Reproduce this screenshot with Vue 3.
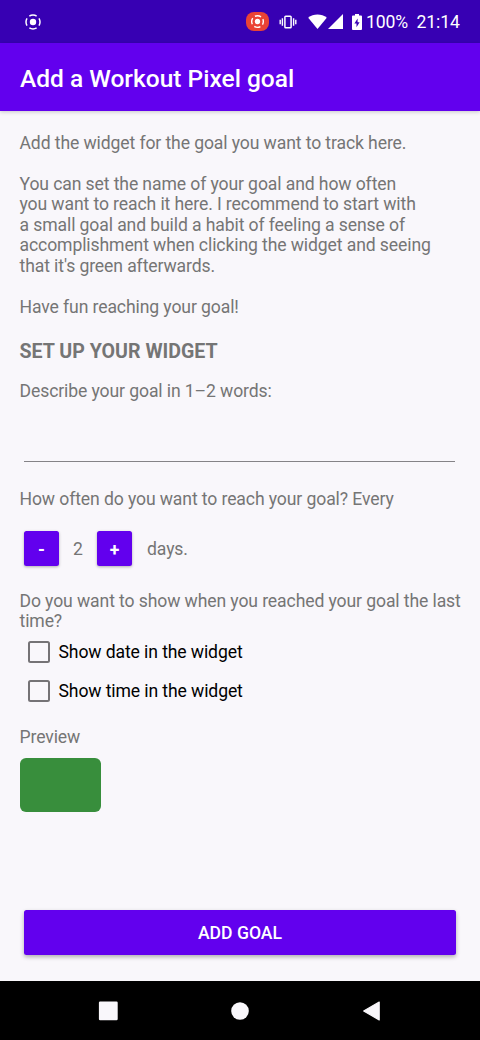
<script setup>
import { ref } from 'vue'

const intro = [
  'Add the widget for the goal you want to track here.',
  '',
  'You can set the name of your goal and how often',
  'you want to reach it here. I recommend to start with',
  'a small goal and build a habit of feeling a sense of',
  'accomplishment when clicking the widget and seeing',
  "that it's green afterwards.",
  '',
  'Have fun reaching your goal!',
].join('\n')

const name = ref('')
const days = ref(2)
const showDate = ref(false)
const showTime = ref(false)
</script>

<template>
  <div class="screen">
    <header class="status">
      <svg class="rec" viewBox="0 0 18 18" width="18" height="18">
        <circle cx="9" cy="9" r="3.2" fill="#fff" />
        <circle cx="9" cy="9" r="7" fill="none" stroke="#fff" stroke-width="1.5" pathLength="80" stroke-dasharray="14 6" stroke-dashoffset="7" />
      </svg>
      <span class="chip">
        <svg viewBox="0 0 18 18" width="15" height="15">
          <circle cx="9" cy="9" r="3.2" fill="#fff" />
          <circle cx="9" cy="9" r="7" fill="none" stroke="#fff" stroke-width="1.7" pathLength="80" stroke-dasharray="14 6" stroke-dashoffset="7" />
        </svg>
      </span>
      <svg class="vibrate" viewBox="0 0 18 14" width="18" height="14" fill="none" stroke="#fff">
        <rect x="5.9" y="1.2" width="6.2" height="11.6" rx="0.8" stroke-width="1.5" />
        <path d="M3.4 3.2v7.6M14.6 3.2v7.6M1.2 4.8v4.4M16.8 4.8v4.4" stroke-width="1.4" />
      </svg>
      <svg class="wifi" viewBox="0 0 19 15" width="19" height="15">
        <path d="M0.2 3.7C5.4-.7 13.6-.7 18.8 3.7L9.5 14.9Z" fill="#fff" />
      </svg>
      <svg class="signal" viewBox="0 0 15 15" width="15" height="15">
        <path d="M0 15 15 0V15Z" fill="#fff" />
      </svg>
      <svg class="battery" viewBox="0 0 10 16" width="10" height="16">
        <path d="M3 0h4v1.6h2.1q.9 0 .9.9v12.6q0 .9-.9.9H.9q-.9 0-.9-.9V2.5q0-.9.9-.9H3Z" fill="#fff" />
        <path d="M5.6 4.4 2.4 9.4H4.5V13.2L7.6 8.2H5.6Z" fill="#3700b3" />
      </svg>
      <span class="percent">100%</span>
      <span class="clock">21:14</span>
    </header>

    <div class="appbar"><h1>Add a Workout Pixel goal</h1></div>

    <main>
      <p class="intro">{{ intro }}</p>
      <h2>SET UP YOUR WIDGET</h2>
      <label class="describe" for="goal">Describe your goal in 1–2 words:</label>
      <input id="goal" v-model="name" type="text" />
      <p class="often">How often do you want to reach your goal? Every</p>
      <div class="stepper">
        <button class="step" @click="days = Math.max(1, days - 1)">-</button>
        <span class="count">{{ days }}</span>
        <button class="step" @click="days++">+</button>
        <span class="unit">days.</span>
      </div>
      <p class="ask">Do you want to show when you reached your goal the last time?</p>
      <div class="checks">
        <label class="check"><input v-model="showDate" type="checkbox" /><span>Show date in the widget</span></label>
        <label class="check"><input v-model="showTime" type="checkbox" /><span>Show time in the widget</span></label>
      </div>
      <p class="preview-label">Preview</p>
      <div class="preview"></div>
      <button class="add">ADD GOAL</button>
    </main>

    <nav>
      <svg viewBox="0 0 20 20" width="20" height="20"><rect x="0.9" y="0.5" width="18.8" height="18.8" rx="1.2" /></svg>
      <svg viewBox="0 0 20 20" width="20" height="20"><circle cx="10" cy="10" r="8.8" /></svg>
      <svg viewBox="0 0 20 20" width="20" height="20"><path d="M17.2 1.1v17.8L1.7 10Z" stroke="#f9f7fb" stroke-width="1.2" stroke-linejoin="round" /></svg>
    </nav>
  </div>
</template>

<style>
body {
  background: #f9f7fb;
}
</style>

<style scoped>
.screen {
  width: 480px;
  height: 1040px;
  display: flex;
  flex-direction: column;
  overflow: hidden;
  background: #f9f7fb;
  color: #757575;
  font-family: Roboto, "Liberation Sans", sans-serif;
  font-size: 17.6px;
  line-height: 20.44px;
  letter-spacing: -0.11px;
}
h1, h2, p {
  margin: 0;
}
button, input {
  box-sizing: border-box;
  border: 0;
  padding: 0;
  margin: 0;
  font: inherit;
}
.status {
  height: 43px;
  flex: none;
  display: flex;
  align-items: center;
  background: #3700b3;
  color: #fff;
  padding-left: 24px;
}
.status svg {
  flex: none;
  display: block;
}
.chip {
  width: 23px;
  height: 19px;
  margin-left: 204px;
  border-radius: 8px;
  background: #ea4335;
  display: flex;
  align-items: center;
  justify-content: center;
}
.vibrate {
  margin-left: 9.5px;
}
.wifi {
  margin-left: 11px;
}
.signal {
  margin-left: 1px;
}
.battery {
  margin-left: 9px;
}
.percent {
  margin-left: 4.5px;
  width: 50.5px;
  padding-top: 1px;
}
.clock {
  padding-top: 1px;
}
.appbar {
  height: 68px;
  flex: none;
  display: flex;
  align-items: center;
  padding: 3px 20px 0;
  box-sizing: border-box;
  background: #6200ee;
  color: #fff;
  box-shadow: 0 1px 4px rgba(0, 0, 0, 0.2);
}
h1 {
  font-size: 24.5px;
  line-height: 31px;
  font-weight: 500;
  letter-spacing: 0;
}
main {
  flex: 1;
  display: flex;
  flex-direction: column;
  align-items: flex-start;
  padding: 22px 20px 0 19.5px;
}
.intro {
  white-space: pre;
}
h2 {
  margin-top: 23.5px;
  font-size: 19.6px;
  line-height: 23px;
  font-weight: 700;
  letter-spacing: 0;
}
.describe {
  margin-top: 17.5px;
}
#goal {
  width: 431px;
  height: 46.5px;
  margin: 14px 0 0 4.5px;
  border-bottom: 1px solid #858387;
  background: transparent;
  outline: none;
}
.often {
  margin-top: 27.5px;
}
.stepper {
  display: flex;
  align-items: center;
  margin: 21.5px 0 0 4.5px;
  height: 35px;
}
.step {
  width: 35px;
  height: 35px;
  border-radius: 2.5px;
  background: #6200ee;
  color: #fff;
  font-weight: 700;
  padding-top: 2px;
  box-shadow: 0 1px 3px rgba(0, 0, 0, 0.3);
}
.count {
  width: 38px;
  text-align: center;
  padding-top: 1px;
}
.unit {
  margin-left: 15px;
  padding-top: 1px;
}
.ask {
  margin-top: 24.5px;
  width: 445px;
}
.checks {
  padding: 1px 0 0 8.5px;
}
.check {
  height: 39px;
  display: flex;
  align-items: center;
  color: #000;
  gap: 8.5px;
}
.check input {
  appearance: none;
  width: 22px;
  height: 22px;
  border: 2.5px solid #757376;
  border-radius: 2.5px;
}
.check input:checked {
  background: #6200ee;
}
.preview-label {
  margin-top: 16px;
}
.preview {
  width: 81px;
  height: 54px;
  margin-top: 10.5px;
  border-radius: 6px;
  background: #388e3c;
}
.add {
  width: 432px;
  height: 45px;
  margin: auto 0 26px 4.5px;
  border-radius: 2.5px;
  padding-top: 2px;
  background: #6200ee;
  color: #fff;
  font-weight: 500;
  letter-spacing: 0;
  box-shadow: 0 2px 4px rgba(0, 0, 0, 0.3);
}
nav {
  height: 59px;
  flex: none;
  box-sizing: border-box;
  background: #000;
  display: flex;
  justify-content: center;
  align-items: center;
  gap: 112px;
}
nav svg {
  fill: #f9f7fb;
}
</style>
